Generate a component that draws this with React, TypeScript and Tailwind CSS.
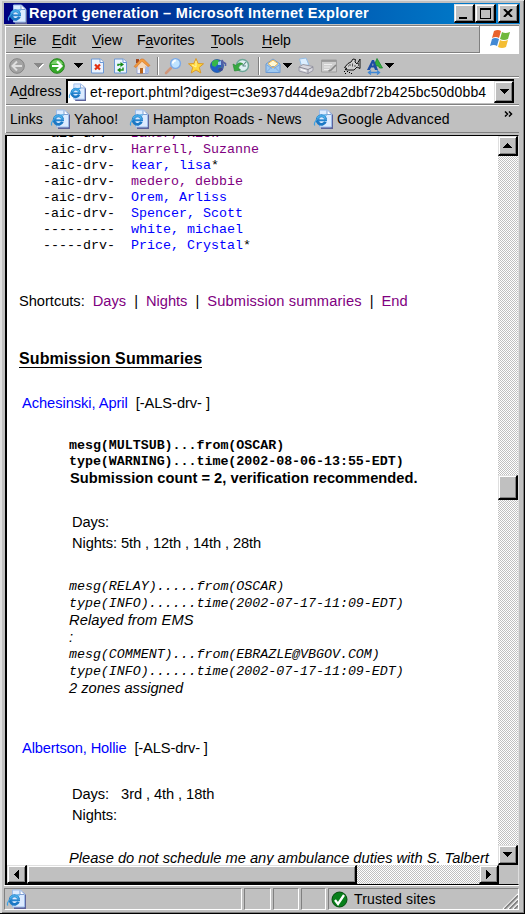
import React from "react";

const raised =
  "border-t border-l border-t-[#dfdfdf] border-l-[#dfdfdf] border-r-2 border-b-2 border-r-black border-b-black shadow-[inset_1px_1px_0_#fff,inset_-1px_-1px_0_#808080]";
const track =
  "bg-[conic-gradient(#fff_25%,#c0c0c0_0_50%,#fff_0_75%,#c0c0c0_0)] bg-[length:2px_2px]";
const groove = "border-b border-b-[#808080] border-t border-t-white";

function PageIcon({ className = "" }: { className?: string }) {
  return (
    <svg viewBox="0 0 20 20" className={"h-5 w-5 shrink-0 " + className}>
      <path d="M8 3h9l3 3v14H8z" fill="#5d6299" />
      <path d="M6.500 1h8l4 4v13h-12z" fill="#dcebff" stroke="#9cbcea" />
      <path d="M14 1.500v4h4" fill="#fff" stroke="#7f9fd2" />
      <path d="M12.400 12.800a4.300 4.300 0 1 1 .3-2.300" fill="none" stroke="#1b78c4" strokeWidth="2.800" />
      <path d="M12.300 9.800a4.300 4.300 0 0 0-8-.6" fill="none" stroke="#4db2ec" strokeWidth="1.600" />
      <path d="M5 11.300h9" stroke="#2384d0" strokeWidth="1.900" />
      <path d="M2 16.500C-1 14 7 5.500 14 6" fill="none" stroke="#3fa1e2" strokeWidth="1.200" />
    </svg>
  );
}

function Tri({ className = "" }: { className?: string }) {
  return (
    <svg viewBox="0 0 10 5" className={"h-[5px] w-[10px] shrink-0 fill-current " + className} shapeRendering="crispEdges">
      <path d="M0 0h10L5 5z" />
    </svg>
  );
}

function Icon({ className, children }: { className: string; children: React.ReactNode }) {
  return (
    <svg viewBox="0 0 16 16" className={"h-4 w-4 shrink-0 overflow-visible " + className} fill="none">
      {children}
    </svg>
  );
}

function Toolbar() {
  return (
    <div className={"flex h-6 items-center pt-px " + groove}>
      <Icon className="ml-[3px]">
        <circle cx="8" cy="8" r="7.300" fill="#a3a3a3" stroke="#848484" />
        <path d="M8 3.500L3.500 8 8 12.500M4 8h9" stroke="#dedede" strokeWidth="2" />
      </Icon>
      <Tri className="ml-2 text-[#888] drop-shadow-[1px_1px_0_#fff]" />
      <Icon className="ml-[6px]">
        <circle cx="8" cy="8" r="7.300" fill="#36a829" stroke="#28831f" />
        <path d="M2 6a6.500 6.500 0 0 1 12 0" fill="#7bd069" />
        <path d="M8 3.500L12.500 8 8 12.500M3 8h9" stroke="#fff" strokeWidth="2.200" />
      </Icon>
      <Tri className="ml-2" />
      <Icon className="ml-[6px]">
        <path d="M2.500 1h9l3 3v11h-12z" fill="#e9f3ff" stroke="#6c98d6" />
        <path d="M11 1v3.500h3.500" fill="#fff" stroke="#6c98d6" />
        <path d="M6 6.500l5 5M11 6.500l-5 5" stroke="#e32f12" strokeWidth="2.200" />
      </Icon>
      <Icon className="ml-[7px]">
        <path d="M2.500 1h9l3 3v11h-12z" fill="#e9f3ff" stroke="#6c98d6" />
        <path d="M11 1v3.500h3.500" fill="#fff" stroke="#6c98d6" />
        <path d="M6 8V6.500h3M11 9.500V12H8" stroke="#219421" strokeWidth="1.500" />
        <path d="M8.500 4L12 6.500 8.500 9zM8.500 9.500L5 12l3.500 2.500z" fill="#138813" />
      </Icon>
      <Icon className="ml-[6px]">
        <path d="M3 8l5-5 6 5v7.500H3z" fill="#f3f3ff" stroke="#98a4cc" />
        <path d="M11 8l4 1v5l-4 1.500z" fill="#9fb8e8" />
        <path d="M2 1h3v4H2z" fill="#a34a22" />
        <path d="M0 8.500L7 1h2.500L16 7.500l-2 1L8 3.500 2 9.500z" fill="#f49a3a" stroke="#cb702b" strokeWidth=".6" />
        <path d="M8 3.500L4 8v4l4-2 4 1V7z" fill="#f9c88e" opacity=".6" />
        <path d="M6 10h3v5.500H6z" fill="#b8651d" />
      </Icon>
      <span className="ml-[7px] h-[18px] w-[2px] border-l border-l-[#808080] bg-white" />
      <Icon className="ml-[6px]">
        <path d="M1 15l5-5" stroke="#d0977c" strokeWidth="2.600" strokeLinecap="round" />
        <circle cx="10.500" cy="5.500" r="4.900" fill="#bfe3ff" stroke="#7aa8e6" strokeWidth="1.400" />
        <path d="M7.800 5.500a3 3 0 0 1 3-3" stroke="#fff" strokeWidth="1.800" />
      </Icon>
      <Icon className="ml-[7px]">
        <path d="M8 .500l2.100 5 5.400.3-4.200 3.500 1.500 5.700L8 12l-4.800 3 1.500-5.700L.500 5.800l5.400-.3z" fill="#ffd93b" stroke="#dd9a2a" />
        <path d="M8 3v6L4 7" stroke="#fff4a9" />
      </Icon>
      <Icon className="ml-[6px]">
        <circle cx="7" cy="8" r="6.500" fill="#1f5fc4" stroke="#23559a" strokeWidth=".7" />
        <path d="M2 4Q5 .500 9 2.500L8 6 5 9 2 7.500zM8 10l4-1-2 5z" fill="#35b649" />
        <path d="M8 4l3-1v4H8z" fill="#9cc8f4" />
        <path d="M12 11V2q.5 2.500 3.500 3.500v2.500" stroke="#5560a4" strokeWidth="1.600" />
        <ellipse cx="10.500" cy="11.500" rx="2.300" ry="1.800" fill="#3c4892" />
      </Icon>
      <Icon className="ml-[7px]">
        <circle cx="9.500" cy="7.500" r="6" fill="#dff0f4" stroke="#6ea798" strokeWidth="1.500" />
        <path d="M9.500 8l3.500-4M9.500 8H13" stroke="#5b8a86" strokeWidth="1.100" />
        <path d="M0 6l1.500 7 6-1-2-2Q6 6.500 10 6 6 3 3 7.500z" fill="#35aa3f" stroke="#23842d" strokeWidth=".6" />
      </Icon>
      <span className="ml-[9px] h-[18px] w-[2px] border-l border-l-[#808080] bg-white" />
      <Icon className="ml-[5px]">
        <path d="M1 6l7-5 7 5v8.500H1z" fill="#9fcaf2" stroke="#6c9bd4" />
        <path d="M3 5.500l5-3.500 5 3.500L8 10z" fill="#fff8d2" stroke="#efb148" />
        <path d="M1 14.500l6-6h2l6 6M1 6.500l6 4M15 6.500l-6 4" stroke="#7da8dc" />
      </Icon>
      <Tri className="ml-px" />
      <Icon className="ml-[6px]">
        <path d="M3.500 8l-2-7L8 0l3 7z" fill="#dceeff" stroke="#94bde5" />
        <path d="M1 9l4-2.500 10 2v4L10 15.500 1 13z" fill="#d9d9e0" stroke="#9a9aa6" />
        <path d="M1 9l9 2.500L15 9M10 11.500v4" stroke="#888894" />
        <path d="M3 11.500l5 1.500" stroke="#fff" />
      </Icon>
      <Icon className="ml-[7px]">
        <path d="M.500 2h15v12H.500z" fill="#cfcfcf" stroke="#9d9d9d" />
        <path d="M1 3h14" stroke="#8e8e8e" strokeWidth="1.500" />
        <path d="M3 6.500h8M3 9h6M3 11.500h5" stroke="#eee" />
        <path d="M15 7l-5 5-2.500 1" stroke="#858585" strokeWidth="1.600" />
      </Icon>
      <Icon className="ml-[7px]">
        <path d="M.500 9.500L4 5.500 7 4l2-3 2.500.500L11 4l2 2 3-5v9.500L13 9l-3 3H4l-3-.500 2-1z" fill="#d0d0d0" stroke="#000" strokeWidth=".9" />
        <path d="M6 6v2M8.500 5.500v3M11 7v2M4 8h1M14.500 5v3" stroke="#333" strokeWidth=".8" />
        <path d="M0 13.500h1M3 13.500h1M1 15.500h1M5 14.500h1M7 15.500h1" stroke="#000" />
      </Icon>
      <Icon className="ml-[7px]">
        <path d="M7 8L10 .500l5.500 9.500h-3l-1-2H9" stroke="#17862b" strokeWidth=".8" fill="#35ad3d" />
        <path fillRule="evenodd" d="M0 12L5 2h2l4 10H8l-1-2.500H4L3 12zM5 7.500h1.500L6 5z" fill="#1c4da4" />
        <path d="M2 14.500h10M4 12.500l-2.500 2L4 16.500M10 12.500l2.500 2-2.500 2" stroke="#3f88d6" strokeWidth="1.300" />
      </Icon>
      <Tri className="ml-px" />
    </div>
  );
}

function ScrollButton({ dir, className = "" }: { dir: "up" | "down" | "left" | "right"; className?: string }) {
  const paths = { up: "M0 7l4.500-5L9 7z", down: "M0 2h9L4.500 7z", left: "M7 0v9L2 4.500z", right: "M2 0v9l5-4.500z" };
  return (
    <div className={"flex h-5 w-5 shrink-0 items-center justify-center bg-[#c0c0c0] " + raised + " " + className}>
      <svg viewBox="0 0 9 9" className="h-[9px] w-[9px]" shapeRendering="crispEdges">
        <path d={paths[dir]} />
      </svg>
    </div>
  );
}

const roster = [
  { flags: "-aic-drv-", name: "Baker, Rick", visited: true, star: false },
  { flags: "-aic-drv-", name: "Harrell, Suzanne", visited: true, star: false },
  { flags: "-aic-drv-", name: "kear, lisa", visited: false, star: true },
  { flags: "-aic-drv-", name: "medero, debbie", visited: true, star: false },
  { flags: "-aic-drv-", name: "Orem, Arliss", visited: false, star: false },
  { flags: "-aic-drv-", name: "Spencer, Scott", visited: false, star: false },
  { flags: "---------", name: "white, michael", visited: false, star: false },
  { flags: "-----drv-", name: "Price, Crystal", visited: false, star: true },
];

function Report() {
  const mono = "font-['Liberation_Mono',monospace] text-[13.33px]";
  return (
    <div className="min-w-0 flex-1 overflow-hidden whitespace-pre bg-white text-[14.67px]">
      <div className={"-mt-[10px] pl-[36px] leading-4 " + mono}>
        {roster.map((r) => (
          <div key={r.name} className="h-4">
            {r.flags + "  "}
            <span className={r.visited ? "text-[#800080]" : "text-[#0000ff]"}>{r.name}</span>
            {r.star && "*"}
          </div>
        ))}
      </div>
      <div className="mt-[37px] h-5 pl-3 leading-5 tracking-[-0.03px]">
        Shortcuts:{"  "}<span className="text-[#800080]">Days</span>{"  |  "}
        <span className="text-[#800080]">Nights</span>{"  |  "}
        <span className="tracking-[0.14px] text-[#800080]">Submission summaries</span>{"  |  "}
        <span className="text-[#800080]">End</span>
      </div>
      <div className="mt-[38px] flex h-5 pl-3 text-base leading-5 font-bold tracking-[0.09px]">
        <span className="h-[19px] border-b border-black">Submission Summaries</span>
      </div>
      <div className="mt-[24px] h-5 pl-[15px] leading-5 tracking-[-0.06px]">
        <span className="text-[#0000ff]">Achesinski, April</span>{"  [-ALS-drv- ]"}
      </div>
      <div className="mt-[25px] pl-[62px] font-bold">
        <div className={"leading-4 tracking-[-0.03px] " + mono}>
          <div>mesg(MULTSUB)...from(OSCAR)</div>
          <div>type(WARNING)...time(2002-08-06-13:55-EDT)</div>
        </div>
        <div className="h-[17px] pl-px leading-[16px] tracking-[0.02px]">Submission count = 2, verification recommended.</div>
      </div>
      <div className="mt-[25px] pl-[65px] leading-[21px] tracking-[-0.1px]">
        <div>Days:</div>
        <div>Nights: 5th , 12th , 14th , 28th</div>
      </div>
      <div className="mt-6 pl-[62px] leading-[17px] italic">
        <div className={"tracking-[-0.03px] " + mono}>
          <div>mesg(RELAY).....from(OSCAR)</div>
          <div>type(INFO)......time(2002-07-17-11:09-EDT)</div>
        </div>
        <div className="tracking-[0.1px]">Relayed from EMS</div>
        <div>:</div>
        <div className={"tracking-[-0.03px] " + mono}>
          <div>mesg(COMMENT)...from(EBRAZLE@VBGOV.COM)</div>
          <div>type(INFO)......time(2002-07-17-11:09-EDT)</div>
        </div>
        <div>2 zones assigned</div>
      </div>
      <div className="mt-[41px] h-5 pl-[15px] leading-5 tracking-[-0.13px]">
        <span className="text-[#0000ff]">Albertson, Hollie</span>{"  [-ALS-drv- ]"}
      </div>
      <div className="mt-[26px] pl-[65px] leading-[21px] tracking-[-0.08px]">
        <div>Days:{"   "}3rd , 4th , 18th</div>
        <div>Nights:</div>
      </div>
      <div className="mt-[22px] h-5 pl-[62px] leading-5 italic">Please do not schedule me any ambulance duties with S. Talbert</div>
    </div>
  );
}

export default function App() {
  const well = "border border-t-[#808080] border-l-[#808080] border-r-white border-b-white";
  return (
    <div className="flex h-[914px] w-[525px] flex-col overflow-hidden border-r border-b border-black bg-[#c0c0c0] pt-[3px] font-['Liberation_Sans',Arial,sans-serif] text-[14px] whitespace-pre text-black shadow-[inset_2px_1px_0_#dfdfdf,inset_-1px_-1px_0_#808080]">
      <div className="mr-1 ml-1 flex h-[21px] shrink-0 items-center bg-linear-to-r from-[#000080] to-[#1084d0]">
        <PageIcon className="ml-[3px]" />
        <span className="ml-[2px] text-[14.5px] leading-[21px] font-bold tracking-[0.29px] text-white">Report generation – Microsoft Internet Explorer</span>
        <div className="mr-px ml-auto flex">
          <div className={"flex h-[19px] w-[21px] items-end bg-[#c0c0c0] pb-[2px] pl-1 " + raised}>
            <span className="h-[2px] w-2 bg-black" />
          </div>
          <div className={"flex h-[19px] w-[21px] items-center justify-center bg-[#c0c0c0] " + raised}>
            <span className="h-[11px] w-[11px] border border-t-2 border-black" />
          </div>
          <div className={"ml-[2px] flex h-[19px] w-[21px] items-center justify-center bg-[#c0c0c0] " + raised}>
            <svg viewBox="0 0 10 8" className="h-2 w-[10px]"><path d="M1 0l8 8M9 0L1 8" stroke="#000" strokeWidth="2" /></svg>
          </div>
        </div>
      </div>

      <div className="mt-px mr-[5px] ml-[5px] flex shrink-0 flex-col border-t border-l border-t-[#808080] border-l-white">
        <div className="flex h-[27px]">
          <div className={"flex flex-1 items-center pt-[2px] " + groove}>
            <div className="w-[38px] pl-2"><u className="underline-offset-2">F</u>ile</div>
            <div className="w-10 pl-2"><u className="underline-offset-2">E</u>dit</div>
            <div className="w-[45px] pl-2"><u className="underline-offset-2">V</u>iew</div>
            <div className="w-[74px] pl-2">F<u className="underline-offset-2">a</u>vorites</div>
            <div className="w-[51px] pl-2"><u className="underline-offset-2">T</u>ools</div>
            <div className="pl-2"><u className="underline-offset-2">H</u>elp</div>
          </div>
          <div className="flex w-10 items-center justify-center border-l border-l-[#808080] bg-white pb-[3px]">
            <svg viewBox="0 0 20 19" className="h-[19px] w-5">
              <path d="M4 2q4-2 7 0L9 9Q6 7 2 9z" fill="#e9622c" />
              <path d="M12 3q3 2 8 0l-2 7q-4 2-8 0z" fill="#70b83b" />
              <path d="M2 10q3-2 7 0l-2 7q-3-2-7 0z" fill="#4389d4" />
              <path d="M10 11q3 2 8 0l-2 7q-4 2-8 0z" fill="#f4bd33" />
            </svg>
          </div>
        </div>
        <Toolbar />
        <div className="flex h-[28px] items-center border-t border-b border-t-white border-b-[#808080]">
          <span className="w-[60px] pl-1">A<u className="underline-offset-2">d</u>dress</span>
          <div className="flex h-[24px] w-[448px] items-center border-t-2 border-l-2 border-black bg-white">
            <PageIcon className="-ml-px h-[18px]" />
            <span className="ml-[3px] flex-1 tracking-[0.15px]">et-report.phtml?digest=c3e937d44de9a2dbf72b425bc50d0bb4</span>
            <div className={"flex h-[22px] w-5 items-center justify-center bg-[#c0c0c0] " + raised}><Tri /></div>
          </div>
        </div>
        <div className="flex h-[28px] items-center border-t border-b border-t-white border-b-[#808080]">
          <span className="w-10 pl-1">Links</span>
          <PageIcon className="ml-1" /><span className="ml-1 w-[56px] tracking-[0.15px]">Yahoo!</span>
          <PageIcon className="-ml-px" /><span className="ml-1 w-[160px]">Hampton Roads - News</span>
          <PageIcon /><span className="ml-1 w-[167px] tracking-[0.15px]">Google Advanced</span>
          <svg viewBox="0 0 9 6" className="mb-[10px] h-[6px] w-[9px]"><path d="M1 .500L3.500 3 1 5.500M5 .500L7.500 3 5 5.500" fill="none" stroke="#000" strokeWidth="1.500" /></svg>
        </div>
      </div>

      <div className="mt-[2px] mr-[5px] ml-[5px] flex h-[750px] shrink-0 flex-col border-t border-r border-b border-l-2 border-t-black border-r-[#dfdfdf] border-b-black border-l-black">
        <div className="flex h-[729px] shrink-0">
          <Report />
          <div className={"flex w-5 flex-col " + track}>
            <ScrollButton dir="up" />
            <div className={"mt-[319px] h-[25px] bg-[#c0c0c0] " + raised} />
            <ScrollButton dir="down" className="mt-auto" />
          </div>
        </div>
        <div className="flex h-[19px]">
          <div className={"flex w-[492px] " + track}>
            <ScrollButton dir="left" className="h-[19px]" />
            <div className={"w-[330px] bg-[#c0c0c0] " + raised} />
            <ScrollButton dir="right" className="ml-auto h-[19px]" />
          </div>
          <div className="flex-1 bg-[#c0c0c0]" />
        </div>
      </div>

      <div className="mr-[5px] ml-1 border-t border-t-white pt-[2px]">
        <div className="flex h-[22px] gap-[2px]">
          <div className={"flex w-[238px] items-center " + well}><PageIcon className="ml-px" /></div>
          <div className={"w-[27px] " + well} />
          <div className={"w-[26px] " + well} />
          <div className={"w-[25px] " + well} />
          <div className={"flex flex-1 items-center " + well}>
            <svg viewBox="0 0 17 17" className="ml-[2px] h-[17px] w-[17px]">
              <circle cx="8.500" cy="8.500" r="7.500" fill="#087f1a" stroke="#034b0b" />
              <path d="M4 9l3 4 6-9" fill="none" stroke="#fff" strokeWidth="2.300" />
            </svg>
            <span className="ml-[6px] tracking-[0.15px]">Trusted sites</span>
            <svg viewBox="0 0 16 16" className="mt-1 ml-auto h-4 w-4">
              <path d="M1 16L16 1M6 16L16 6M11 16l5-5" stroke="#fff" strokeWidth="1.200" />
              <path d="M2.500 16L16 2.500M7.500 16L16 7.500M12.500 16l3.500-3.500" stroke="#808080" strokeWidth="1.600" />
            </svg>
          </div>
        </div>
      </div>
    </div>
  );
}
